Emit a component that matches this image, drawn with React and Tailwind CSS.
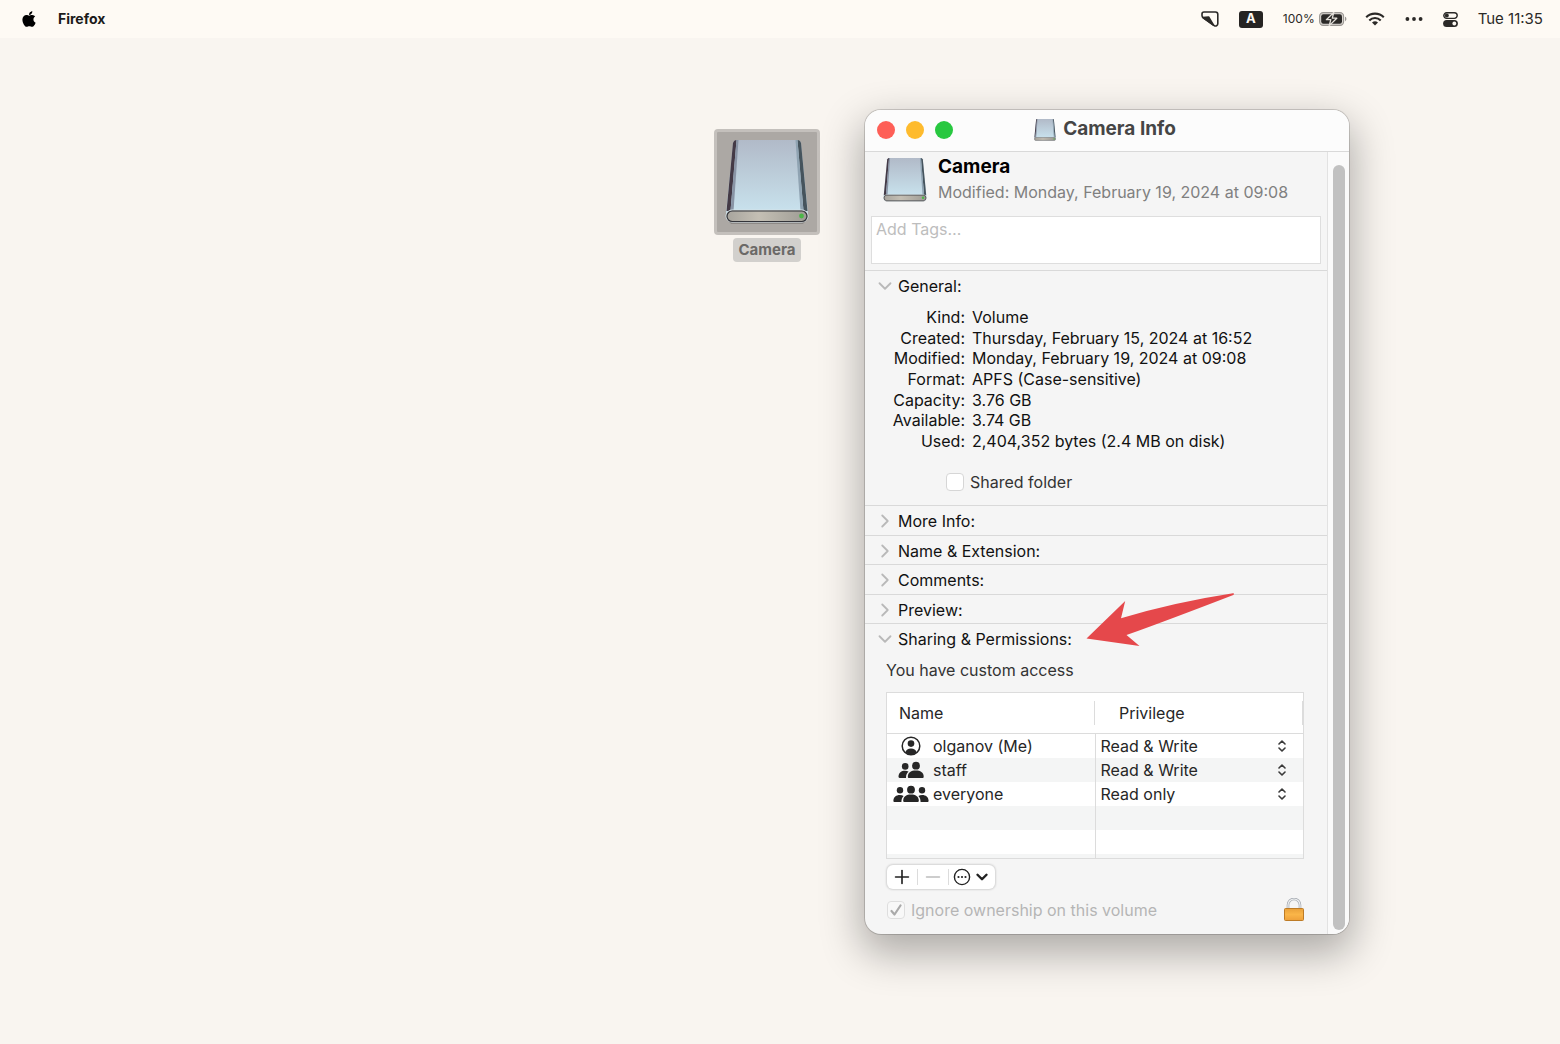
import React, { useState } from 'react';
import { FaApple } from 'react-icons/fa';
import { ChevronDown, ChevronRight, Minus, Plus } from 'lucide-react';

const details = [
  ['Kind:', 'Volume'],
  ['Created:', 'Thursday, February 15, 2024 at 16:52'],
  ['Modified:', 'Monday, February 19, 2024 at 09:08'],
  ['Format:', 'APFS (Case-sensitive)'],
  ['Capacity:', '3.76 GB'],
  ['Available:', '3.74 GB'],
  ['Used:', '2,404,352 bytes (2.4 MB on disk)'],
];

const closedSections = ['More Info:', 'Name & Extension:', 'Comments:', 'Preview:'];

const users = [
  { name: 'olganov (Me)', privilege: 'Read & Write', Icon: PersonIcon },
  { name: 'staff', privilege: 'Read & Write', Icon: PairIcon },
  { name: 'everyone', privilege: 'Read only', Icon: GroupIcon },
];

function PersonIcon() {
  return (
    <svg width="20" height="20" viewBox="0 0 20 20" fill="#262626">
      <circle cx="10" cy="10" r="8.8" fill="none" stroke="#262626" strokeWidth="1.5" />
      <circle cx="10" cy="7.6" r="3.3" />
      <path d="M4.2 16.4C5 13.6 7.2 12.4 10 12.4s5 1.2 5.8 4A9 9 0 0 1 10 18.6a9 9 0 0 1-5.8-2.2Z" />
    </svg>
  );
}

function PairIcon() {
  return (
    <svg width="26" height="18" viewBox="0 0 26 18" fill="#262626">
      <circle cx="7.2" cy="5.4" r="3.3" />
      <path d="M.5 15.6C.7 11.8 3.3 9.8 7 9.8c1.5 0 2.7.3 3.6.9-1.8 1.3-2.6 3-2.6 6.3H1.6C.9 17 .5 16.5.5 15.6Z" />
      <circle cx="18" cy="4.7" r="3.9" />
      <path d="M9.8 15.5c.2-3.9 3.4-5.9 8-5.9s7.7 2 7.9 5.9c0 1-.5 1.5-1.3 1.5H11.1c-.8 0-1.3-.5-1.3-1.5Z" />
    </svg>
  );
}

function GroupIcon() {
  return (
    <svg width="36" height="18" viewBox="0 0 36 18" fill="#262626">
      <circle cx="7" cy="5.3" r="3.2" />
      <path d="M.4 15.7C.5 12 3.2 9.900 6.800 9.900c1.500 0 2.800.3 3.800 1-1.500 1.500-2.200 3.300-2.200 6.100H1.600c-.8 0-1.200-.5-1.200-1.300Z" />
      <circle cx="29" cy="5.3" r="3.2" />
      <path d="M35.6 15.7c-.1-3.7-2.8-5.8-6.4-5.8-1.5 0-2.8.3-3.8 1 1.5 1.5 2.2 3.3 2.2 6.1h6.8c.8 0 1.2-.5 1.2-1.3Z" />
      <circle cx="18" cy="4.7" r="3.9" />
      <path d="M10.2 15.5c.2-3.9 3.3-5.9 7.8-5.9s7.6 2 7.8 5.9c0 1-.5 1.5-1.3 1.5h-13c-.8 0-1.3-.5-1.3-1.5Z" />
    </svg>
  );
}

function DriveIcon({ id, className }) {
  return (
    <svg className={className} viewBox="0 0 84 86">
      <defs>
        <linearGradient id={`${id}-top`} x1="0" y1="0" x2="0" y2="1">
          <stop offset="0" stopColor="#b1bac8" />
          <stop offset="1" stopColor="#c9e3ee" />
        </linearGradient>
        <linearGradient id={`${id}-front`} x1="0" y1="0" x2="1" y2="0">
          <stop offset="0" stopColor="#a7a49d" />
          <stop offset="0.4" stopColor="#c4bfb4" />
          <stop offset="1" stopColor="#9d9b94" />
        </linearGradient>
      </defs>
      <path d="M2 80h80l-4 5H6Z" fill="#000" opacity="0.18" />
      <path d="M8 4q1-3 4-3h60q3 0 4 3l7 71H1Z" fill={`url(#${id}-top)`} />
      <path d="M8 4q1-3 3.500-3L5.500 72H1.500Z" fill="#443a46" />
      <path d="M11.500 1h2L8.500 72h-3Z" fill="#8994a5" />
      <path d="M76 4q-1-3-3.500-3l6 71h4Z" fill="#46545d" />
      <path d="M72.500 1h-2l5 71h3Z" fill="#8fa3b2" />
      <rect x="1" y="71" width="82" height="12" rx="6" fill={`url(#${id}-front)`} stroke="#d5e2e8" />
      <rect x="2" y="72" width="80" height="10.5" rx="5.2" fill="none" stroke="#33343a" strokeWidth="1.2" />
      <circle cx="76.500" cy="77" r="2.400" fill="#4cb648" />
    </svg>
  );
}

function LockIcon() {
  return (
    <svg width="20" height="24" viewBox="0 0 20 24">
      <defs>
        <linearGradient id="lock-body" x1="0" y1="0" x2="0" y2="1">
          <stop offset="0" stopColor="#e9a13a" />
          <stop offset="0.5" stopColor="#fab548" />
          <stop offset="1" stopColor="#eea03a" />
        </linearGradient>
      </defs>
      <path d="M4 12V7a6 6 0 0 1 12 0v5" fill="none" stroke="#a4a9b0" strokeWidth="2.6" />
      <path d="M4 12V7a6 6 0 0 1 12 0v5" fill="none" stroke="#eef0f2" strokeWidth="1.2" />
      <rect x="0.5" y="10.5" width="19" height="12" rx="1" fill="url(#lock-body)" stroke="#bd7b26" />
    </svg>
  );
}

function UpDownIcon() {
  return (
    <svg width="8" height="12" viewBox="0 0 8 12" fill="none" stroke="#3a3a3a" strokeWidth="1.6" strokeLinecap="round" strokeLinejoin="round">
      <path d="M1 4l3-3 3 3M1 8l3 3 3-3" />
    </svg>
  );
}

function MenuBar() {
  return (
    <header className="flex h-[38px] items-center justify-between bg-[#fefaf4] pr-[17px] pl-5 text-[15px] text-[#2b2927]">
      <div className="flex items-center gap-5">
        <button aria-label="Apple menu">
          <FaApple size={18} className="text-black" />
        </button>
        <button className="text-sm font-bold text-[#1c1b1a]">Firefox</button>
      </div>
      <div className="flex items-center">
        <svg className="mr-5" width="18" height="16" viewBox="0 0 18 16" fill="none" stroke="#2b2927" strokeWidth="1.6" strokeLinejoin="round">
          <path d="M3 1h11.500a2.300 2.300 0 0 1 2.300 2.300v9.400a2.300 2.300 0 0 1-3.600 1.900L2.300 6.800A2.600 2.600 0 0 1 1 4.500V3a2 2 0 0 1 2-2Z" />
          <path d="M2 6.600 7.600 6l4.800 8Z" fill="#2b2927" />
        </svg>
        <span className="mr-5 flex h-[17px] w-6 items-center justify-center rounded-[3px] bg-[#262422] text-[13px] font-bold text-[#fefaf4]">
          A
        </span>
        <span className="mr-1 text-xs">100%</span>
        <svg className="mr-[18px]" width="28" height="14" viewBox="0 0 28 14">
          <rect x="0.6" y="0.6" width="24" height="12.8" rx="3.6" fill="#d9d5d0" stroke="#9b9793" strokeWidth="1.1" />
          <rect x="2.2" y="2.2" width="20.8" height="9.6" rx="2.2" fill="#2b2927" />
          <path d="M26 4.800v4.400c.9-.3 1.400-1.200 1.400-2.200S26.900 5.100 26 4.800Z" fill="#9b9793" />
          <path d="M14.800.4 7.400 7.700h4.400l-1.600 5.900 7.600-7.400h-4.500Z" fill="#2b2927" stroke="#e4e0da" strokeWidth="1.3" strokeLinejoin="round" />
        </svg>
        <svg className="mr-5" width="20" height="14" viewBox="0 0 20 14" fill="none" stroke="#2b2927" strokeWidth="2.1">
          <path d="M1.200 5.200a12.500 12.500 0 0 1 17.600 0M4.300 8.400a8.100 8.100 0 0 1 11.400 0" />
          <path d="M10 13.600 7 10.600a4.300 4.300 0 0 1 6 0Z" fill="#2b2927" stroke="none" />
        </svg>
        <svg className="mr-5" width="18" height="4" viewBox="0 0 18 4" fill="#2b2927">
          <circle cx="2.4" cy="2" r="1.9" />
          <circle cx="9" cy="2" r="1.9" />
          <circle cx="15.6" cy="2" r="1.9" />
        </svg>
        <svg className="mr-5" width="15" height="15" viewBox="0 0 15 15">
          <rect x="0.8" y="0.8" width="13.4" height="5.6" rx="2.8" fill="none" stroke="#2b2927" strokeWidth="1.4" />
          <circle cx="3.8" cy="3.6" r="2" fill="#2b2927" />
          <rect x="0.1" y="8" width="14.8" height="7" rx="3.5" fill="#2b2927" />
          <circle cx="11.3" cy="11.5" r="1.9" fill="#fefaf4" />
        </svg>
        <time className="text-[15px]">Tue 11:35</time>
      </div>
    </header>
  );
}

function DesktopIcon() {
  return (
    <button className="absolute top-[129px] right-[740px] flex w-[106px] flex-col items-center gap-[3px]">
      <span className="flex h-[106px] w-full justify-center rounded-sm border-3 border-[#c4c0bc] bg-[#aca8a4] pt-[7px]">
        <DriveIcon id="desktop" className="h-[86px] w-[84px]" />
      </span>
      <span className="rounded bg-[#d2d0cd] px-[5px] text-[15px] leading-6 font-bold text-[#6b6967]">
        Camera
      </span>
    </button>
  );
}

function SectionHeader({ title, open, onClick }) {
  const Chevron = open ? ChevronDown : ChevronRight;
  return (
    <button
      onClick={onClick}
      aria-expanded={open}
      className="flex min-h-[29px] w-full items-center gap-[2px] border-t border-[#d9d9d9] pt-[2px] pl-[9px] text-left"
    >
      <Chevron size={22} strokeWidth={2} className="text-[#b9b9b9]" />
      {title}
    </button>
  );
}

function PermissionsTable() {
  return (
    <table className="w-full table-fixed border-collapse border border-[#dcdcdc] bg-white text-[#262626]">
      <thead>
        <tr className="h-[41px] border-b border-[#dcdcdc] text-left">
          <th className="p-0 font-normal">
            <div className="h-6 border-r border-[#dcdcdc] pl-3">Name</div>
          </th>
          <th className="p-0 font-normal">
            <div className="h-6 border-r border-[#dcdcdc] pl-6">Privilege</div>
          </th>
        </tr>
      </thead>
      <tbody>
        {users.map(({ name, privilege, Icon }) => (
          <tr key={name} className="h-6 leading-6 even:bg-[#f4f5f5]">
            <td className="border-r border-[#dcdcdc] p-0">
              <div className="flex items-center gap-1 pl-[6px]">
                <span className="flex w-9 justify-center">
                  <Icon />
                </span>
                {name}
              </div>
            </td>
            <td className="p-0">
              <div className="flex items-center pr-[17px]">
                <select
                  aria-label={`Privilege for ${name}`}
                  defaultValue={privilege}
                  className="h-6 flex-1 appearance-none bg-transparent pl-[5px]"
                >
                  <option>Read & Write</option>
                  <option>Read only</option>
                </select>
                <UpDownIcon />
              </div>
            </td>
          </tr>
        ))}
        <tr className="h-6 bg-[#f4f5f5]">
          <td className="border-r border-[#dcdcdc]" />
          <td />
        </tr>
        <tr className="h-6">
          <td className="border-r border-[#dcdcdc]" />
          <td />
        </tr>
        <tr className="h-1 bg-[#f4f5f5]">
          <td className="border-r border-[#dcdcdc] p-0" />
          <td className="p-0" />
        </tr>
      </tbody>
    </table>
  );
}

function InfoWindow() {
  const [generalOpen, setGeneralOpen] = useState(true);
  const [sharingOpen, setSharingOpen] = useState(true);
  const [shared, setShared] = useState(false);

  return (
    <section className="absolute top-[110px] right-[211px] flex w-[484px] flex-col overflow-hidden rounded-2xl bg-[#f5f5f5] text-base text-[#111] shadow-[0_0_0_1px_rgba(0,0,0,0.16),0_16px_40px_4px_rgba(0,0,0,0.3)]">
      {/* Title bar */}
      <div className="grid h-[42px] grid-cols-[1fr_auto_1fr] items-center border-b border-[#d9d9d9] bg-[#fcfcfc] pr-4 pb-[2px] pl-3">
        <div className="flex gap-[11px]">
          <button aria-label="Close" className="size-[18px] rounded-full bg-[#fe5f57]" />
          <button aria-label="Minimize" className="size-[18px] rounded-full bg-[#febb2e]" />
          <button aria-label="Zoom" className="size-[18px] rounded-full bg-[#28c840]" />
        </div>
        <h1 className="flex items-center gap-[7px] text-[19px] font-bold text-[#454545]">
          <DriveIcon id="title" className="h-6 w-[22px]" />
          Camera Info
        </h1>
      </div>

      <div className="flex">
        <div className="min-w-0 flex-1">
          <div className="flex gap-[11px] pt-1 pl-[18px]">
            <DriveIcon id="header" className="h-12 w-11" />
            <div>
              <h2 className="text-[19px] leading-[22px] font-bold text-black">Camera</h2>
              <p className="mt-[2px] leading-6 text-[#808080]">
                Modified: Monday, February 19, 2024 at 09:08
              </p>
            </div>
          </div>
          <div className="px-[6px] pt-3 pb-[6px]">
            <textarea
              aria-label="Tags"
              placeholder="Add Tags…"
              className="block h-12 w-full resize-none border border-[#dedede] bg-white px-1 leading-6 placeholder:text-[#bdbdbd]"
            />
          </div>

          <SectionHeader title="General:" open={generalOpen} onClick={() => setGeneralOpen(!generalOpen)} />
          {generalOpen && (
            <div className="pb-[11px]">
              <dl className="mt-2 grid h-36 auto-rows-fr grid-cols-[100px_1fr] items-center gap-x-[7px] leading-5">
                {details.map(([label, value]) => (
                  <React.Fragment key={label}>
                    <dt className="text-right">{label}</dt>
                    <dd>{value}</dd>
                  </React.Fragment>
                ))}
              </dl>
              <label className="mt-[19px] ml-[81px] flex items-center gap-[6px] text-[#333]">
                <input
                  type="checkbox"
                  checked={shared}
                  onChange={(e) => setShared(e.target.checked)}
                  className="size-[18px] appearance-none rounded border border-[#d6d6d6] bg-white checked:bg-blue-500"
                />
                Shared folder
              </label>
            </div>
          )}

          <div className="grid h-[118px] auto-rows-fr">
            {closedSections.map((title) => (
              <SectionHeader key={title} title={title} open={false} />
            ))}
          </div>

          <SectionHeader title="Sharing & Permissions:" open={sharingOpen} onClick={() => setSharingOpen(!sharingOpen)} />
          {sharingOpen && (
            <div className="pt-[6px] pr-[23px] pb-3 pl-[21px]">
              <p className="mb-[10px] text-[#333]">You have custom access</p>
              <PermissionsTable />
              <div className="mt-[6px] ml-px flex h-6 w-[108px] items-center rounded-md bg-white text-[#222] shadow-[0_0_2px_1px_rgba(0,0,0,0.14)]">
                <button aria-label="Add" className="flex w-[30px] justify-center">
                  <Plus size={22} strokeWidth={1.8} />
                </button>
                <span className="h-4 w-px bg-[#dcdcdc]" />
                <button aria-label="Remove" disabled className="flex w-[30px] justify-center text-[#bdbdbd]">
                  <Minus size={22} strokeWidth={1.8} />
                </button>
                <span className="h-4 w-px bg-[#dcdcdc]" />
                <button aria-label="Actions" className="flex flex-1 items-center justify-center gap-[2px]">
                  <svg width="18" height="18" viewBox="0 0 18 18" fill="#222">
                    <circle cx="9" cy="9" r="7.6" fill="none" stroke="#222" strokeWidth="1.4" />
                    <circle cx="5.5" cy="9" r="1.1" />
                    <circle cx="9" cy="9" r="1.1" />
                    <circle cx="12.5" cy="9" r="1.1" />
                  </svg>
                  <ChevronDown size={18} strokeWidth={3.2} />
                </button>
              </div>
              <div className="mt-[9px] flex items-center justify-between">
                <label className="flex items-center gap-[6px] text-[#b5b5b5]">
                  <span className="relative ml-px flex">
                    <input
                      type="checkbox"
                      checked
                      disabled
                      readOnly
                      className="size-[18px] appearance-none rounded border border-[#dedede] bg-[#f8f8f8]"
                    />
                    <svg className="absolute top-[3px] left-[3px]" width="12" height="12" viewBox="0 0 12 12" fill="none" stroke="#aaa" strokeWidth="2.2" strokeLinecap="round" strokeLinejoin="round">
                      <path d="M1.500 7l3 3.500L10.500 1.500" />
                    </svg>
                  </span>
                  Ignore ownership on this volume
                </label>
                <button aria-label="Unlock">
                  <LockIcon />
                </button>
              </div>
            </div>
          )}
        </div>
        {/* Scroll bar */}
        <div className="flex w-[22px] justify-center border-l border-[#e2e2e2] bg-[#fafafa] pt-[13px] pb-1">
          <div className="w-3 rounded-full bg-[#c1c1c1]" />
        </div>
      </div>
    </section>
  );
}

export default function App() {
  return (
    <div className="relative min-h-screen overflow-hidden bg-[#f9f5f0] font-['Inter',sans-serif]">
      <MenuBar />
      <DesktopIcon />
      <InfoWindow />
      {/* Pointer to the sharing section */}
      <svg className="pointer-events-none absolute top-[592px] right-[324px]" width="150" height="56" viewBox="0 0 150 56" fill="#e5484b">
        <path d="M.5 46.500 39.200 9 35 26.200Q90 10 147 1.300q2 .4.300 1.600Q85 27 40.500 43L53.500 54Z" />
      </svg>
    </div>
  );
}
